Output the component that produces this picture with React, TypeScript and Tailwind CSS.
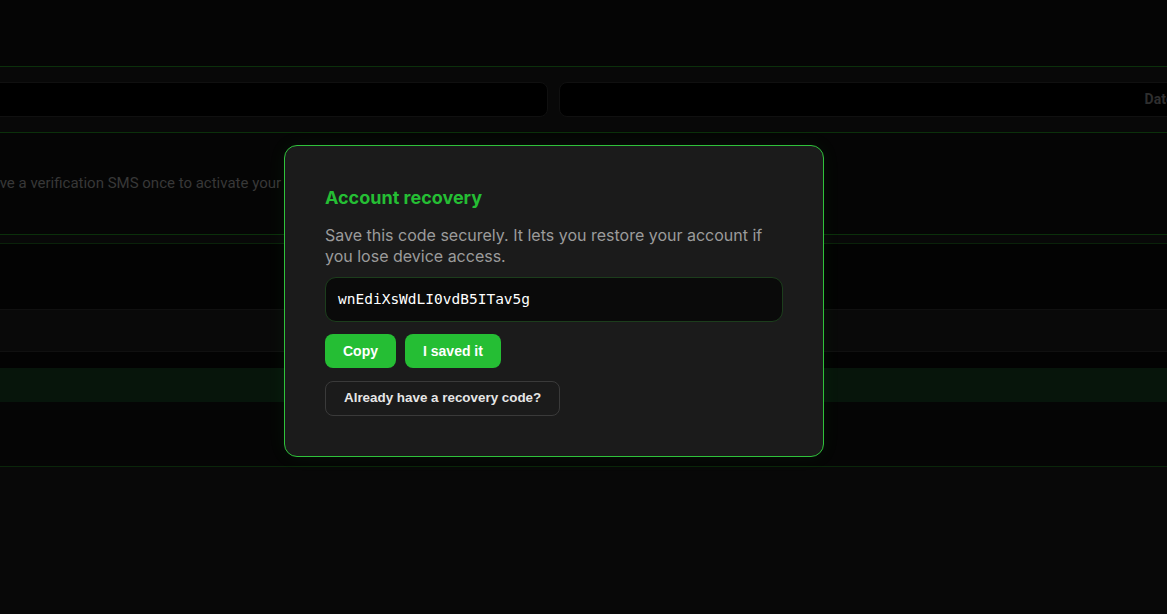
export default function App() {
  return (
    <main className="relative min-h-screen h-[614px] overflow-hidden bg-[#050505] font-['Roboto',sans-serif]">
      {/* Dimmed page underneath */}
      <div className="ml-[-60px] w-[1300px] flex flex-col">
        <div className="h-[67px] border-b border-[#0b300b]" />
        <div className="h-[66px] flex items-center gap-[11px] bg-[#080808] pr-4 border-b border-[#0b300b]">
          <div className="h-[35px] w-[608px] rounded-lg border border-[#101010] bg-black" />
          <div className="h-[35px] flex-1 rounded-lg border border-[#101010] bg-black flex items-center pl-[585px] whitespace-nowrap text-[14px] font-bold text-[#2e2e2e]">
            Date of birth
          </div>
        </div>
        <div className="h-[102px] flex items-center border-b border-[#0b300b]">
          <p className="pl-[23px] whitespace-nowrap text-[15px] text-[#383838]">
            Receive a verification SMS once to activate your
          </p>
        </div>
        <div className="h-[9px] bg-[#080808] border-b border-[#0a220a]" />
        <div className="h-[66px] bg-[#030303] border-b border-[#101010]" />
        <div className="h-[42px] bg-[#090909] border-b border-[#101010]" />
        <div className="h-[16px] bg-[#030303]" />
        <div className="h-[34px] bg-[#07150b]" />
        <div className="h-[65px] bg-[#050505] border-b border-[#0a260a]" />
        <div className="h-[150px] bg-[#080808]" />
      </div>

      {/* Recovery modal */}
      <div className="absolute left-[284px] top-[145px] w-[540px] rounded-[13px] border border-[#2fc23b] bg-[#1b1b1b] px-10 pt-10 pb-10 shadow-[0_0_18px_rgba(37,190,52,0.07)] font-['Inter',sans-serif]">
        <h2 className="text-[18px] leading-6 font-bold text-[#25be34]">Account recovery</h2>
        <p className="mt-[15px] text-[16px] leading-[21px] text-[#9b9b9b]">
          Save this code securely. It lets you restore your account if you lose device access.
        </p>
        <div className="mt-[10px] h-[45px] rounded-[11px] border border-[#1c3d1c] bg-[#0a0a0a] flex items-center px-3 font-['DejaVu_Sans_Mono',monospace] text-[14.5px] text-white">
          wnEdiXsWdLI0vdB5ITav5g
        </div>
        <div className="mt-[12px] flex gap-[9px] font-['Liberation_Sans',Arial,sans-serif]">
          <button className="h-[34px] rounded-lg bg-[#25be34] px-[18px] text-[14px] font-bold text-white">Copy</button>
          <button className="h-[34px] rounded-lg bg-[#25be34] px-[18px] text-[14px] font-bold text-white">I saved it</button>
        </div>
        <div className="mt-[13px] flex font-['Liberation_Sans',Arial,sans-serif]">
          <button className="h-[35px] rounded-lg border border-[#3a3a3a] bg-transparent px-[18px] text-[13.4px] font-bold text-[#e6e6e6]">
            Already have a recovery code?
          </button>
        </div>
      </div>
    </main>
  );
}
